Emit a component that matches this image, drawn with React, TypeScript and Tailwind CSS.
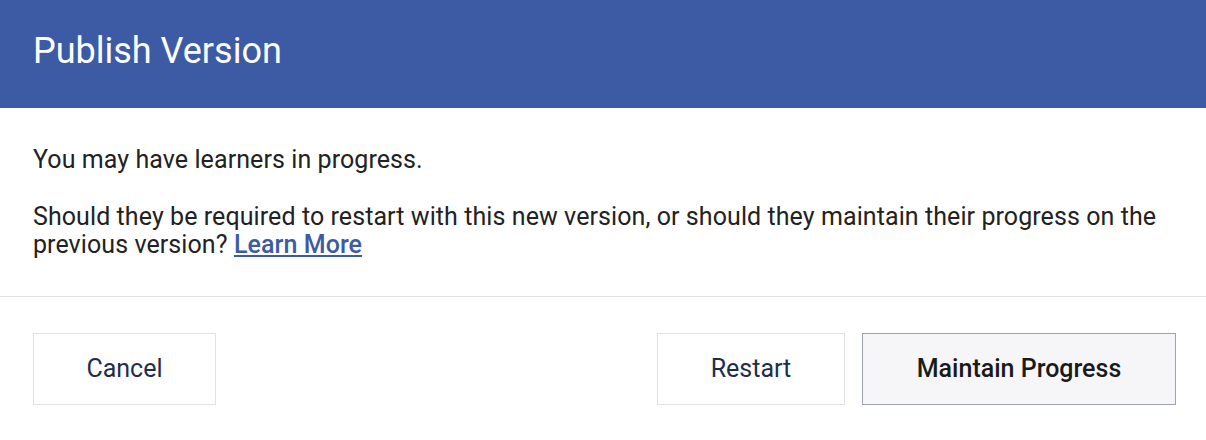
import React from "react";

export default function App() {
  return (
    <div className="w-[1206px] h-[440px] bg-white overflow-hidden" style={{ fontFamily: "Roboto, 'Liberation Sans', sans-serif" }}>
      <div className="h-[108px] bg-[#3d5ba5] flex items-center px-[33px] pb-[6px]">
        <h1 className="text-white text-[36px] leading-none font-normal">Publish Version</h1>
      </div>
      <div className="pl-[33px] pr-[30px] pt-[38px] pb-[37px] text-[25px] leading-[28px] text-[#222222] tracking-[0.08px]">
        <p>You may have learners in progress.</p>
        <p className="mt-[29px]">
          Should they be required to restart with this new version, or should they maintain their progress on the previous version?{" "}
          <a href="#" className="text-[#3d5ba5] font-medium underline underline-offset-2">Learn More</a>
        </p>
      </div>
      <div className="h-px bg-[#e1e1e8]" />
      <div className="flex items-center pl-[33px] pr-[30px] pt-[36px]">
        <button className="w-[183px] h-[72px] border border-[#e1e1e8] bg-white text-[#1f2d4d] text-[25px]">Cancel</button>
        <div className="flex-1" />
        <button className="w-[188px] h-[72px] border border-[#e1e1e8] bg-white text-[#1f2d4d] text-[25px]">Restart</button>
        <button className="ml-[17px] w-[314px] h-[72px] border border-[#9ea2af] bg-[#f6f6f8] text-[#1a1a1a] text-[25px] font-medium">Maintain Progress</button>
      </div>
    </div>
  );
}
